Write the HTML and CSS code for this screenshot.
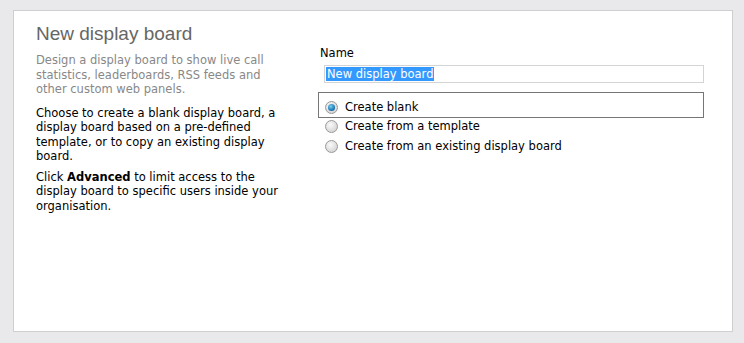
FILE: index.html
```html
<!DOCTYPE html>
<html lang="en">
<head>
  <meta charset="UTF-8" />
  <title>New display board</title>
  <link rel="stylesheet" href="styles.css">
</head>
<body>
  <div class="panel">
    <div class="intro">
      <h1>New display board</h1>
      <p class="lead">Design a display board to show live call statistics, leaderboards, RSS feeds and other custom web panels.</p>
      <p>Choose to create a blank display board, a display board based on a pre-defined template, or to copy an existing display board.</p>
      <p>Click <strong>Advanced</strong> to limit access to the display board to specific users inside your organisation.</p>
    </div>

    <div class="form">
      <label class="field-label">Name</label>
      <div class="text-input"><span class="selected">New display board</span></div>

      <div class="options">
        <label class="option focused"><span class="radio checked"></span>Create blank</label>
        <label class="option"><span class="radio"></span>Create from a template</label>
        <label class="option"><span class="radio"></span>Create from an existing display board</label>
      </div>
    </div>
  </div>
</body>
</html>
```

FILE: styles.css
```css
* {
  box-sizing: border-box;
  margin: 0;
  padding: 0;
}

body {
  background-color: #e9e9eb;
  font-family: 'DejaVu Sans', Verdana, sans-serif;
  font-size: 11.5px;
  color: #000;
  padding: 10px 11px 11px 13px;
}

.panel {
  display: flex;
  height: 322px;
  background-color: #fff;
  border: 1px solid #cfcfcf;
  padding: 11px 28px 0 22px;
}

/* Left description column */
.intro {
  width: 252px;
}

.intro h1 {
  font-family: 'Liberation Sans', Arial, sans-serif;
  font-weight: normal;
  font-size: 19px;
  color: #666;
  line-height: 24px;
  margin-bottom: 7px;
}

.intro p {
  line-height: 14.5px;
  margin-bottom: 6px;
}

.intro p.lead {
  color: #888;
  margin-bottom: 9px;
}

/* Right form column */
.form {
  flex: 1;
  margin-left: 30px;
  padding-top: 24px;
}

.field-label {
  display: block;
  line-height: 14px;
  margin-left: 2px;
  margin-bottom: 5px;
}

.text-input {
  height: 18px;
  margin-left: 6px;
  border: 1px solid #d4d4d4;
  padding: 1px 1px;
  line-height: 14px;
}

.selected {
  background-color: #3399ff;
  color: #fff;
  padding: 0 1px;
}

.options {
  margin-top: 9px;
}

.option {
  display: flex;
  align-items: center;
  height: 20px;
  padding-left: 6px;
  border: 1px solid transparent;
}

.option.focused {
  height: 26px;
  padding-top: 4px;
  border-color: #767676;
  margin-bottom: -2px;
}

.radio {
  width: 13px;
  height: 13px;
  border-radius: 50%;
  border: 1px solid #9a9a9a;
  background: radial-gradient(circle at 40% 35%, #fafafa 0%, #d8d8d8 70%, #c8c8c8 100%);
  margin-right: 7px;
  position: relative;
}

.radio.checked::after {
  content: '';
  position: absolute;
  left: 2px;
  top: 2px;
  width: 7px;
  height: 7px;
  border-radius: 50%;
  background: radial-gradient(circle at 40% 35%, #7fd0f0 0%, #1a7ab8 60%, #0b4d7a 100%);
}
```
